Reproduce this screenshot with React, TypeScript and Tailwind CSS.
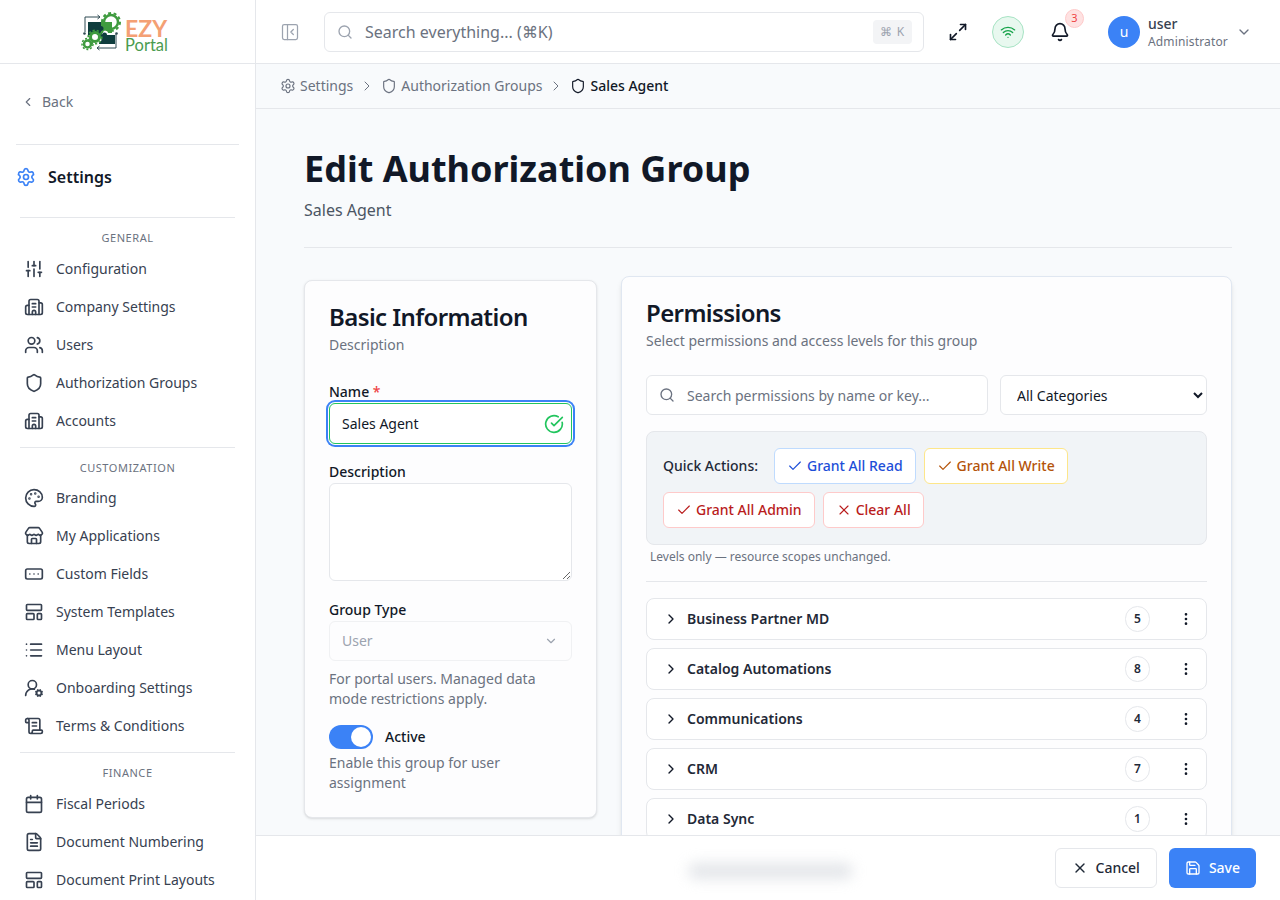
import {
  Bell,
  Building2,
  Calendar,
  Check,
  ChevronDown,
  ChevronLeft,
  ChevronRight,
  CircleCheckBig,
  EllipsisVertical,
  FileText,
  LayoutTemplate,
  List,
  Maximize2,
  Palette,
  PanelLeftClose,
  RectangleEllipsis,
  Save,
  ScrollText,
  Search,
  Settings,
  Shield,
  SlidersVertical,
  Store,
  UserRoundCog,
  Users,
  Wifi,
  X,
} from "lucide-react";

const sections = [
  {
    title: "GENERAL",
    titleClass: "mb-[4px]",
    items: [
      { label: "Configuration", icon: SlidersVertical },
      { label: "Company Settings", icon: Building2 },
      { label: "Users", icon: Users },
      { label: "Authorization Groups", icon: Shield },
      { label: "Accounts", icon: Building2 },
    ],
  },
  {
    title: "CUSTOMIZATION",
    titleClass: "mb-[3px]",
    items: [
      { label: "Branding", icon: Palette },
      { label: "My Applications", icon: Store },
      { label: "Custom Fields", icon: RectangleEllipsis },
      { label: "System Templates", icon: LayoutTemplate },
      { label: "Menu Layout", icon: List },
      { label: "Onboarding Settings", icon: UserRoundCog },
      { label: "Terms & Conditions", icon: ScrollText },
    ],
  },
  {
    title: "FINANCE",
    titleClass: "mb-[4px]",
    items: [
      { label: "Fiscal Periods", icon: Calendar },
      { label: "Document Numbering", icon: FileText },
      { label: "Document Print Layouts", icon: LayoutTemplate },
    ],
  },
];

const groups = [
  { name: "Business Partner MD", count: 5 },
  { name: "Catalog Automations", count: 8 },
  { name: "Communications", count: 4 },
  { name: "CRM", count: 7 },
  { name: "Data Sync", count: 1 },
];

function Logo() {
  return (
    <div className="flex items-center gap-[3px]">
      <svg width="41" height="40" viewBox="0 0 41 40" fill="none">
        {/* frame with arrows */}
        <path d="M4 20V5h15" stroke="#2f4a52" strokeWidth="1" />
        <path d="M16.500 3l2.500 2-2.500 2" stroke="#2f4a52" strokeWidth="1" />
        <path d="M35 22v14H16" stroke="#2f4a52" strokeWidth="1" />
        <path d="M18.500 34L16 36l2.500 2" stroke="#2f4a52" strokeWidth="1" />
        <circle cx="3.500" cy="21.500" r="1.300" fill="#2f4a52" />
        <circle cx="35.500" cy="21.500" r="1.300" fill="#2f4a52" />
        {/* top right gear */}
        <circle cx="30" cy="10" r="7" stroke="#3f9b3f" strokeWidth="2.500" />
        <circle cx="30" cy="10" r="9" stroke="#3f9b3f" strokeWidth="2" strokeDasharray="3 2.600" />
        {/* puzzle */}
        <path d="M7 10h14v4a2.500 2.500 0 0 1 0 5v4h-5a3 3 0 0 0-6 0H7z" fill="#0f3d3e" />
        <path d="M20 10h11v11h-4a2.500 2.500 0 0 0-5 0h-2v-2a2.500 2.500 0 0 0 0-5z" fill="#3f9b3f" />
        <path d="M18 23h3a2.500 2.500 0 0 1 5 0h8v9H18v-2a2.500 2.500 0 0 0 0-5z" fill="#0f3d3e" />
        {/* lower gears */}
        <circle cx="14" cy="25" r="4.500" stroke="#3f9b3f" strokeWidth="3" />
        <circle cx="14" cy="25" r="6.800" stroke="#3f9b3f" strokeWidth="1.600" strokeDasharray="2.200 2" />
        <circle cx="6.500" cy="32" r="3.500" fill="#fff" stroke="#3f9b3f" strokeWidth="2.500" />
        <circle cx="6.500" cy="32" r="5.500" stroke="#3f9b3f" strokeWidth="1.500" strokeDasharray="2 1.800" />
      </svg>
      <div className="flex flex-col pt-[9px] font-['Lato',sans-serif]">
        <span className="text-[23px] leading-[18px] font-bold text-[#f4a074]">EZY</span>
        <span className="text-[16.500px] leading-[16px] text-[#4a9b4f]">Portal</span>
      </div>
    </div>
  );
}

function Sidebar() {
  return (
    <aside className="flex h-[900px] w-[256px] shrink-0 flex-col overflow-hidden border-r border-[#e5e7eb] bg-white">
      <div className="flex h-[64px] shrink-0 items-center justify-center border-b border-[#e5e7eb] pr-[6px]">
        <Logo />
      </div>
      <div className="flex h-[80px] shrink-0 flex-col px-4">
        <div className="flex h-[76px] items-center gap-[7px] pl-[5px] text-sm text-[#6b7280]">
          <ChevronLeft size={14} />
          Back
        </div>
      </div>
      <div className="mx-4 flex h-[73px] shrink-0 items-center gap-[12px] border-t border-[#e5e7eb] pb-[9px]">
        <Settings size={20} className="text-[#3b82f6]" />
        <span className="text-base font-semibold text-[#111827]">Settings</span>
      </div>
      {sections.map((section) => (
        <div key={section.title} className="mx-5 border-t border-[#e5e7eb] pt-[12px] pb-[7px]">
          <p className={`text-center text-[11px] leading-[16px] tracking-[0.55px] text-[#6b7280] ${section.titleClass}`}>
            {section.title}
          </p>
          {section.items.map(({ label, icon: Icon }) => (
            <div key={label} className="flex h-[38px] items-center gap-[12px] pl-[4px] text-sm text-[#374151]">
              <Icon size={20} strokeWidth={2} className="shrink-0" />
              <span>{label}</span>
            </div>
          ))}
        </div>
      ))}
    </aside>
  );
}

function TopBar() {
  return (
    <header className="flex h-[64px] shrink-0 items-center border-b border-[#e5e7eb] bg-white pl-[24px]">
      <PanelLeftClose size={20} strokeWidth={1.5} className="text-[#9ca3af]" />
      <div className="ml-[24px] flex h-[40px] w-[600px] items-center rounded-md border border-[#e5e7eb] bg-white pr-[11px] pl-[12px]">
        <Search size={16} className="text-[#9ca3af]" />
        <span className="ml-[12px] flex-1 text-base text-[#6b7280]">Search everything... (⌘K)</span>
        <span className="flex h-[24px] w-[39px] items-center justify-center rounded bg-[#f3f4f6] text-xs tracking-[1px] text-[#9ca3af]">
          ⌘ K
        </span>
      </div>
      <Maximize2 size={20} className="ml-[24px] text-[#111827]" />
      <div className="ml-[24px] flex h-[32px] w-[32px] items-center justify-center rounded-full border border-[#a7e3c4] bg-[#e8f8ef]">
        <Wifi size={16} className="text-[#16a34a]" />
      </div>
      <div className="relative ml-[26px] h-[20px] w-[20px]">
        <Bell size={20} strokeWidth={2} className="text-[#111827]" />
        <span className="absolute -top-[13px] left-[15px] flex h-[19px] w-[19px] items-center justify-center rounded-full border border-[#fecaca] bg-[#fee2e2] text-[11px] text-[#ef4444]">
          3
        </span>
      </div>
      <div className="ml-[38px] flex h-[32px] w-[32px] items-center justify-center rounded-full bg-[#3b82f6] text-sm text-white">
        u
      </div>
      <div className="ml-[8px] flex w-[80px] flex-col pt-[2px]">
        <span className="text-sm leading-[18px] font-medium text-[#374151]">user</span>
        <span className="text-xs leading-[18px] tracking-[0.15px] text-[#6b7280]">Administrator</span>
      </div>
      <ChevronDown size={16} className="ml-[8px] text-[#6b7280]" />
    </header>
  );
}

function Breadcrumbs() {
  return (
    <nav className="flex h-[45px] shrink-0 items-center border-b border-[#e5e7eb] bg-[#f8fafc] pl-[24px] text-sm text-[#6b7280]">
      <Settings size={16} strokeWidth={1.75} className="mr-[4px]" />
      <span>Settings</span>
      <ChevronRight size={16} strokeWidth={1.5} className="mx-[6px]" />
      <Shield size={16} strokeWidth={1.75} className="mr-[4px]" />
      <span>Authorization Groups</span>
      <ChevronRight size={16} strokeWidth={1.5} className="mx-[6px]" />
      <Shield size={16} strokeWidth={1.75} className="mr-[4px] text-[#111827]" />
      <span className="font-medium text-[#111827]">Sales Agent</span>
    </nav>
  );
}

function BasicInfo() {
  return (
    <section className="mt-[4px] h-[538px] w-[293px] shrink-0 rounded-lg border border-[#e5e7eb] bg-[#fdfdfe] px-6 pt-[20px] shadow-sm">
      <h2 className="text-2xl leading-[32px] font-semibold tracking-tight text-[#111827]">Basic Information</h2>
      <p className="mt-[2px] text-sm leading-[20px] text-[#6b7280]">Description</p>

      <label className="mt-[27px] block text-sm leading-[20px] font-medium text-[#111827]">
        Name <span className="text-[#ef4444]">*</span>
      </label>
      <div className="mt-[1px] flex h-[41px] items-center rounded-md border border-[#22c55e] bg-white pr-[7px] pl-[12px] text-sm text-[#111827] shadow-[0_0_0_1px_#fff,0_0_0_3px_#3b82f6]">
        <span className="flex-1">Sales Agent</span>
        <CircleCheckBig size={20} className="text-[#22c55e]" />
      </div>

      <label className="mt-[18px] block text-sm leading-[20px] font-medium text-[#111827]">Description</label>
      <textarea className="mt-[1px] block h-[98px] w-full rounded-md border border-[#e5e7eb] bg-white" />

      <label className="mt-[19px] block text-sm leading-[20px] font-medium text-[#111827]">Group Type</label>
      <div className="mt-[1px] flex h-[40px] items-center justify-between rounded-md border border-[#f0f1f3] bg-[#fdfdfe] pr-[13px] pl-[12px] text-sm text-[#9ca3af]">
        User
        <ChevronDown size={14} />
      </div>
      <p className="mt-[8px] text-sm leading-[20px] text-[#6b7280]">
        For portal users. Managed data mode restrictions apply.
      </p>

      <div className="mt-[16px] flex items-center gap-3">
        <div className="flex h-[24px] w-[44px] items-center justify-end rounded-full bg-[#3b82f6] pr-[2px]">
          <div className="h-[20px] w-[20px] rounded-full bg-white" />
        </div>
        <span className="text-sm font-medium text-[#111827]">Active</span>
      </div>
      <p className="mt-[4px] text-sm leading-[20px] text-[#6b7280]">Enable this group for user assignment</p>
    </section>
  );
}

function QuickButton({ label, tone, icon: Icon }: { label: string; tone: string; icon: typeof Check }) {
  return (
    <button className={`flex h-[36px] items-center gap-[4px] rounded-md border bg-white px-[12px] text-sm font-medium ${tone}`}>
      <Icon size={16} strokeWidth={1.75} />
      {label}
    </button>
  );
}

function Permissions() {
  return (
    <section className="min-w-0 flex-1 rounded-lg border border-[#e0e7f1] bg-[#fdfdfe] px-6 pt-[20px] pb-6 shadow-md">
      <h2 className="text-2xl leading-[32px] font-semibold tracking-tight text-[#111827]">Permissions</h2>
      <p className="mt-[2px] text-sm leading-[20px] text-[#6b7280]">Select permissions and access levels for this group</p>

      <div className="mt-[24px] flex gap-3">
        <div className="flex h-[40px] flex-1 items-center rounded-md border border-[#e5e7eb] bg-white pl-[12px] text-sm text-[#6b7280]">
          <Search size={16} className="text-[#6b7280]" />
          <span className="ml-[12px] pt-[2px]">Search permissions by name or key...</span>
        </div>
        <select className="h-[40px] w-[207px] rounded-md border border-[#e5e7eb] bg-white pr-[4px] pl-[12px] text-sm text-[#111827]">
          <option>All Categories</option>
        </select>
      </div>

      <div className="mt-[16px] flex h-[114px] w-[561px] flex-wrap content-start gap-x-[8px] gap-y-[8px] rounded-lg border border-[#e5e7eb] bg-[#f1f4f7] px-4 pt-4">
        <span className="mr-[8px] flex h-[36px] items-center text-sm font-medium text-[#1f2937]">Quick Actions:</span>
        <QuickButton label="Grant All Read" icon={Check} tone="border-[#bfdbfe] text-[#1d4ed8]" />
        <QuickButton label="Grant All Write" icon={Check} tone="border-[#fde68a] text-[#b45309]" />
        <QuickButton label="Grant All Admin" icon={Check} tone="border-[#fecaca] text-[#b91c1c]" />
        <QuickButton label="Clear All" icon={X} tone="border-[#fecaca] text-[#b91c1c]" />
      </div>
      <p className="mt-[4px] pl-[4px] text-xs leading-[16px] text-[#6b7280]">Levels only — resource scopes unchanged.</p>

      <div className="mt-[16px] border-t border-[#e5e7eb] pt-[16px]">
        <div className="flex flex-col gap-2">
          {groups.map((group) => (
            <div key={group.name} className="flex h-[42px] items-center rounded-lg border border-[#e5e7eb] bg-white pr-[12px] pl-[16px]">
              <ChevronRight size={16} className="text-[#111827]" />
              <span className="ml-[8px] flex-1 text-sm font-semibold text-[#1f2937]">{group.name}</span>
              <span className="flex h-[26px] w-[25px] items-center justify-center rounded-full border border-[#e5e7eb] text-xs font-semibold text-[#1f2937]">
                {group.count}
              </span>
              <EllipsisVertical size={16} className="ml-[28px] text-[#111827]" />
            </div>
          ))}
        </div>
      </div>
    </section>
  );
}

function Footer() {
  return (
    <footer className="flex h-[65px] shrink-0 items-center border-t border-[#e5e7eb] bg-white pr-[24px]">
      <div className="mt-[6px] ml-[432px] h-[16px] w-[165px] rounded-full bg-[#d1d5db] opacity-60 blur-[7px]" />
      <div className="ml-auto flex gap-3">
        <button className="flex h-[40px] items-center gap-[8px] rounded-md border border-[#e5e7eb] bg-white px-[16px] text-sm font-medium text-[#1f2937]">
          <X size={16} />
          Cancel
        </button>
        <button className="flex h-[40px] items-center gap-[8px] rounded-md bg-[#3b82f6] px-[16px] text-sm font-medium text-white">
          <Save size={16} />
          Save
        </button>
      </div>
    </footer>
  );
}

export default function App() {
  return (
    <div className="flex h-[900px] w-[1280px] overflow-hidden bg-[#f8fafc] font-['Noto_Sans',sans-serif]">
      <Sidebar />
      <div className="flex min-w-0 flex-1 flex-col">
        <TopBar />
        <Breadcrumbs />
        <main className="min-h-0 flex-1 overflow-hidden px-12 pt-[36px]">
          <h1 className="text-4xl leading-[48px] font-bold text-[#111827]">Edit Authorization Group</h1>
          <p className="mt-[5px] text-base leading-[24px] text-[#4b5563]">Sales Agent</p>
          <div className="mt-[25px] border-t border-[#e5e7eb]" />
          <div className="mt-[28px] flex items-start gap-6">
            <BasicInfo />
            <Permissions />
          </div>
        </main>
        <Footer />
      </div>
    </div>
  );
}
